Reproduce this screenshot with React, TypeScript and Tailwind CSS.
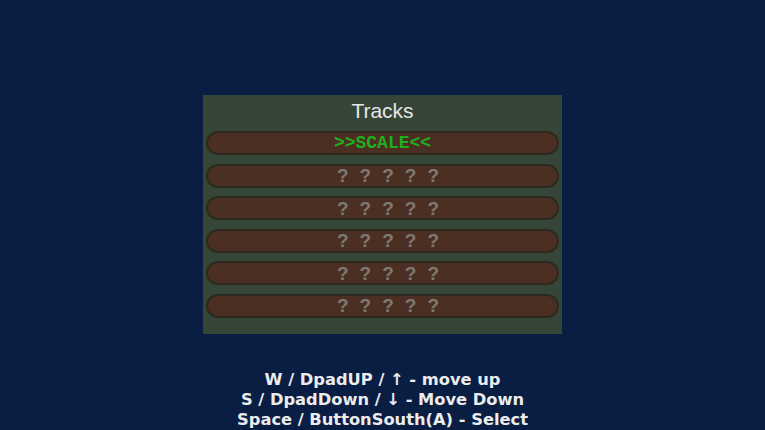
import React from 'react';

const tracks = ['SCALE', null, null, null, null, null];

export default function App() {
  return (
    <div className="w-[765px] h-[430px] bg-[#0a1e44] overflow-hidden pt-[95px] font-['Liberation_Sans',Arial,sans-serif]">
      <div className="w-[359px] h-[239px] mx-auto bg-[#354639] px-[3px] flex flex-col">
        <div className="h-[36px] flex items-center justify-center text-[21px] text-[#e6e6e6] pb-[4px]">Tracks</div>
        <div className="flex flex-col gap-[8.6px]">
          {tracks.map((t, i) => (
            <div
              key={i}
              className="h-[24px] rounded-full bg-[#4b2f22] border-2 border-[#2c2a1e] flex items-center justify-center"
            >
              {t ? (
                <span className="font-['Liberation_Mono',monospace] font-bold text-[18px] text-[#1fae1f] leading-none">
                  {'>>' + t + '<<'}
                </span>
              ) : (
                <span className="flex gap-[11px] pl-[11px] text-[19px] font-semibold text-[#7e7a72] leading-none">
                  <span>?</span>
                  <span>?</span>
                  <span>?</span>
                  <span>?</span>
                  <span>?</span>
                </span>
              )}
            </div>
          ))}
        </div>
      </div>
      <div className="mt-[36px] flex flex-col items-center text-[16.3px] leading-[20px] font-bold text-[#ececec] font-['DejaVu_Sans',sans-serif]">
        <div>W / DpadUP / ↑ - move up</div>
        <div>S / DpadDown / ↓ - Move Down</div>
        <div>Space / ButtonSouth(A) - Select</div>
      </div>
    </div>
  );
}
